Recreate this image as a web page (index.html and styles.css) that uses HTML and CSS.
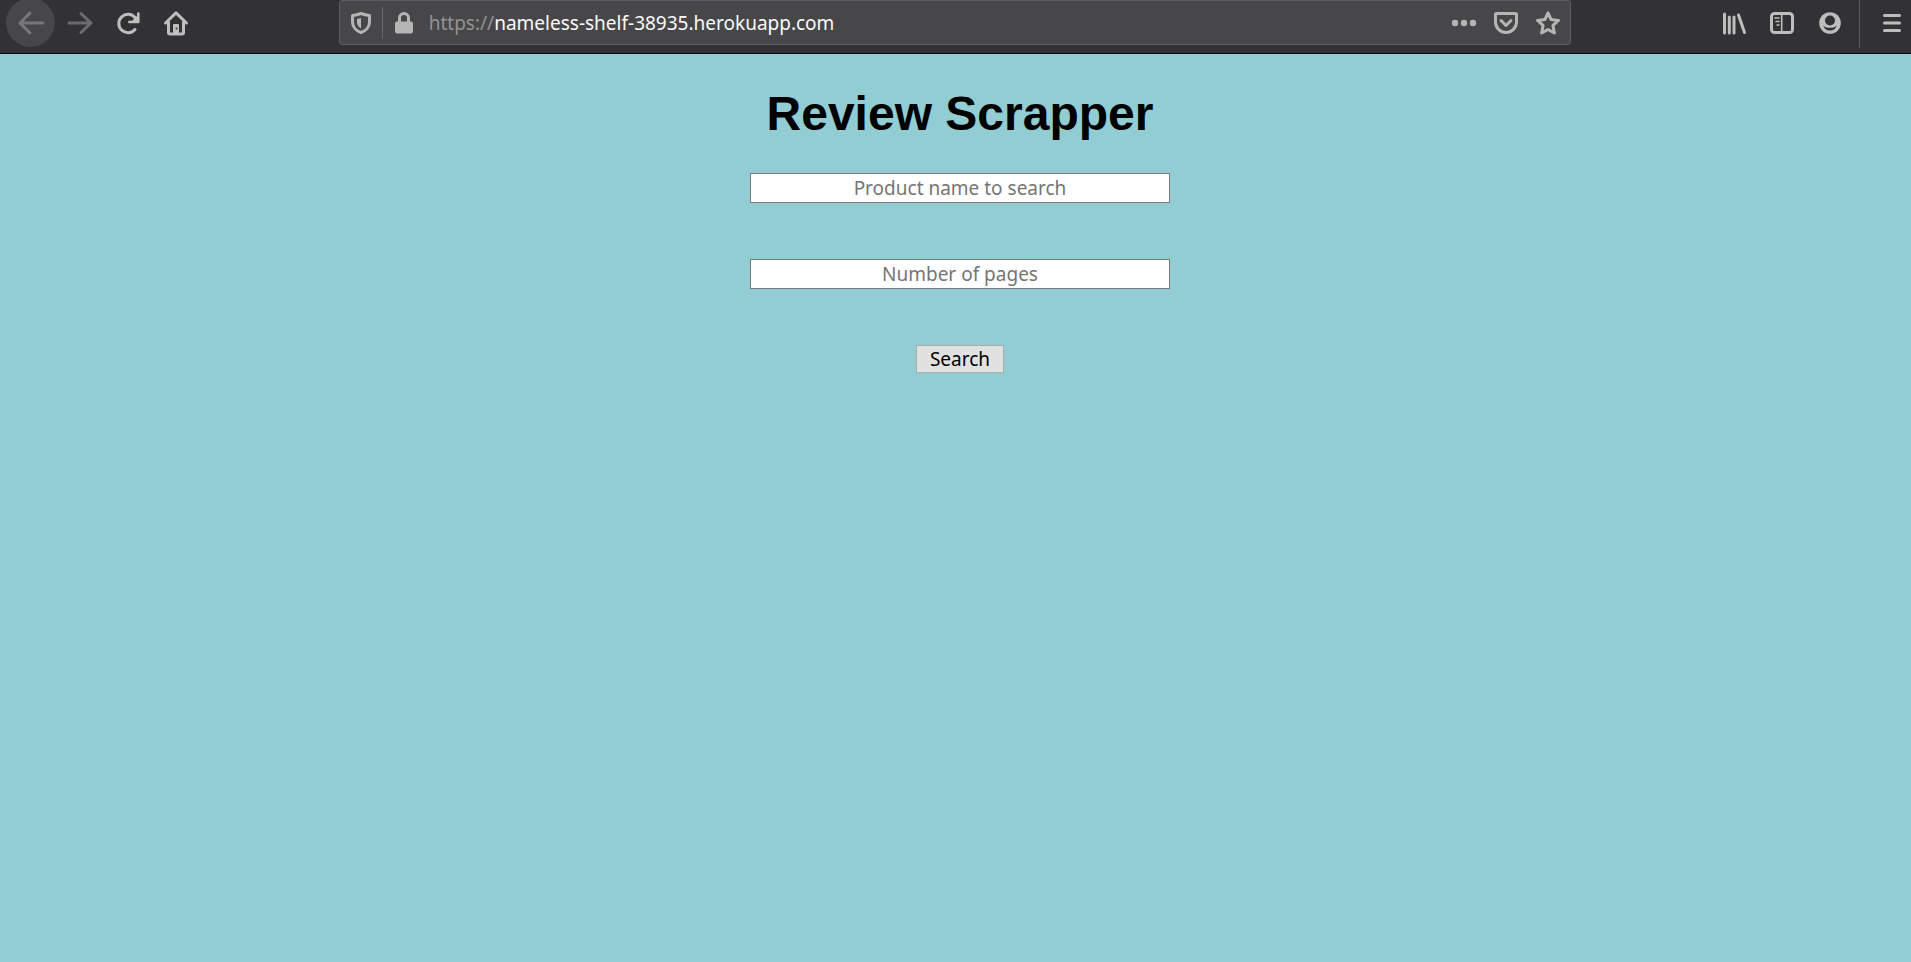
FILE: index.html
```html
<!DOCTYPE html>
<html lang="en">
<head>
<meta charset="utf-8">
<title>Review Scrapper</title>
<link rel="stylesheet" href="styles.css">
</head>
<body>
<header class="toolbar">
  <nav class="group" aria-label="Navigation">
    <button class="tool back" type="button" aria-label="Back" disabled><svg width="28" height="28" viewBox="0 0 28 28"><path d="M26 14H3M13 4L3 14l10 10"/></svg></button>
    <button class="tool forward" type="button" aria-label="Forward" disabled><svg width="28" height="28" viewBox="0 0 28 28"><path d="M3 14h22M15 4.500l10 9.500-10 9.500"/></svg></button>
    <button class="tool" type="button" aria-label="Reload"><svg width="28" height="28" viewBox="0 0 28 28"><path d="M21 20.500A9.200 9.200 0 1 1 21 8.500" stroke-width="3"/><path d="M24.300 4.500v8.500h-9" stroke-width="2.600"/><path d="M24 6v7h-7z" class="solid"/></svg></button>
    <button class="tool" type="button" aria-label="Home"><svg width="28" height="28" viewBox="0 0 28 28"><path d="M3.500 14L14 3.800 24.500 14" stroke-width="3"/><path d="M6.500 13v10.500q0 1.500 1.500 1.500h12q1.500 0 1.500-1.500V13" stroke-width="3"/><path d="M11 24v-8q0-1 1-1h4q1 0 1 1v8z" class="solid"/><circle cx="14.500" cy="19.500" r="1" class="hole"/></svg></button>
  </nav>
  <div class="spring"></div>
  <div class="urlbar">
    <button class="field-button shield" type="button" aria-label="Tracking protection"><svg width="22" height="24" viewBox="0 0 22 24"><path d="M11 2.500Q15 4 19.500 4.500V11c0 5-4 9-8.500 10.500C6.500 20 2.500 16 2.500 11V4.500Q7 4 11 2.500z" stroke-width="3"/><path d="M11 7v10.500c-2.500-1.500-4-4-4-6.500V8z" class="solid"/></svg></button>
    <span class="field-rule"></span>
    <button class="field-button lock" type="button" aria-label="Connection secure"><svg width="22" height="24" viewBox="0 0 22 24"><rect x="2" y="10.500" width="18" height="12" rx="2" class="solid"/><path d="M6.500 12V7a4.500 4.500 0 0 1 9 0v5" stroke-width="3"/></svg></button>
    <div class="url"><span class="scheme">https://</span>nameless-shelf-38935.herokuapp.com</div>
    <button class="field-button action" type="button" aria-label="Page actions"><svg width="28" height="28" viewBox="0 0 28 28"><g class="solid"><circle cx="5" cy="14" r="3.200"/><circle cx="14" cy="14" r="3.200"/><circle cx="23" cy="14" r="3.200"/></g></svg></button>
    <button class="field-button action" type="button" aria-label="Save to Pocket"><svg width="28" height="28" viewBox="0 0 28 28"><path d="M4.500 4.500h19q1 0 1 1V13a10.500 10.500 0 0 1-21 0V5.500q0-1 1-1z" stroke-width="3"/><path d="M9 11.500l5 5 5-5" stroke-width="3"/></svg></button>
    <button class="field-button action" type="button" aria-label="Bookmark"><svg width="28" height="28" viewBox="0 0 28 28"><path d="M14 3.800l3.100 6.800 7.400.8-5.600 5 1.500 7.600L14 20.500 7.600 24l1.500-7.600-5.600-5 7.400-.8z" stroke-width="3"/></svg></button>
  </div>
  <div class="spring"></div>
  <div class="group right">
    <button class="tool" type="button" aria-label="Library"><svg width="28" height="28" viewBox="0 0 28 28"><path d="M4.500 5v19M9.300 8v16M14 8v16M18.500 6L24.500 23.500" stroke-width="3"/></svg></button>
    <button class="tool" type="button" aria-label="Sidebars"><svg width="28" height="28" viewBox="0 0 28 28"><rect x="3.500" y="4.500" width="21" height="19" rx="3" stroke-width="3"/><path d="M13.700 5v18" stroke-width="1.600"/><path d="M7 9h4M8 12.500h3M9 16h2" stroke-width="1.600"/></svg></button>
    <button class="tool" type="button" aria-label="Account"><svg width="28" height="28" viewBox="0 0 28 28"><circle cx="14" cy="14" r="10.800" class="solid"/><circle cx="14" cy="11.500" r="5" class="hole"/><path d="M7.200 16.200q2 2.600 6.800 2.600t6.800-2.600q-1.600 5.300-6.800 5.300t-6.800-5.300z" class="hole"/></svg></button>
  </div>
  <button class="tool menu" type="button" aria-label="Open menu"><svg width="28" height="28" viewBox="0 0 28 28"><path d="M6.500 6.500h15M6.500 14h15M6.500 21.500h15" stroke-width="3"/></svg></button>
</header>
<main class="page">
  <h1 class="title">Review Scrapper</h1>
  <form class="search">
    <input class="text" type="text" placeholder="Product name to search" aria-label="Product name to search">
    <input class="text" type="text" placeholder="Number of pages" aria-label="Number of pages">
    <button class="submit" type="button">Search</button>
  </form>
</main>
</body>
</html>
```
FILE: styles.css
```css
* { box-sizing: border-box; }
body {
  margin: 0;
  min-height: 100vh;
  background: #91cdd3;
  font-family: "Noto Sans", "Open Sans", sans-serif;
}
button { margin: 0; padding: 0; border: 0; background: none; font: inherit; }
svg {
  display: block;
  fill: none;
  stroke: currentColor;
  stroke-width: 3;
  stroke-linecap: round;
  stroke-linejoin: round;
}
.solid { fill: currentColor; stroke: none; }
.hole { fill: #323234; stroke: none; }

.toolbar {
  display: flex;
  align-items: flex-start;
  height: 54px;
  padding-left: 6px;
  background: #323234;
  border-bottom: 1px solid #0c0c0d;
  overflow: hidden;
}
.group { display: flex; }
.right { padding-right: 5px; }
.tool {
  display: grid;
  place-items: center;
  width: 48px;
  height: 46px;
  color: #bebebf;
}
.back {
  width: 49px;
  height: 49px;
  margin: -2px 1px 0 0;
  border-radius: 50%;
  background: #474749;
  color: #777779;
}
.forward { color: #6c6c6e; }
.menu {
  width: 52px;
  height: 48px;
  padding: 0 0 2px 13px;
  border-left: 1px solid #5b5b5d;
}
.spring { flex: 139 1 0; }
.urlbar {
  flex: 1232 1 0;
  display: flex;
  align-items: center;
  height: 45px;
  padding-right: 1px;
  background: #474749;
  border: 1px solid #5d5d5f;
  border-radius: 3px;
}
.field-button {
  display: grid;
  place-items: center;
  width: 42px;
  height: 43px;
  color: #b5b5b6;
}
.field-rule { width: 1px; height: 32px; background: #626a74; }
.url {
  flex: 1;
  padding-left: 4px;
  color: #f9f9fa;
  font-size: 19px;
  line-height: 28px;
  white-space: nowrap;
}
.scheme { color: #929294; }

.page {
  display: flex;
  flex-direction: column;
  align-items: center;
  padding: 32px 0 0 9px;
}
.title {
  margin: 0 0 32px;
  font: bold 48px/55px "Liberation Sans", Arial, sans-serif;
  color: #000;
}
.search {
  display: flex;
  flex-direction: column;
  align-items: center;
  gap: 56px;
}
.text {
  width: 420px;
  height: 30px;
  padding: 0 2px;
  border: 1px solid #7a7a7a;
  background: #fff;
  font: 19px/28px "Noto Sans", "Open Sans", sans-serif;
  text-align: center;
}
.text::placeholder { color: #757575; opacity: 1; }
.submit {
  width: 88px;
  height: 28px;
  border: 1px solid #adadad;
  background: #e1e1e1;
  color: #000;
  font-size: 19px;
  line-height: 26px;
}
```
